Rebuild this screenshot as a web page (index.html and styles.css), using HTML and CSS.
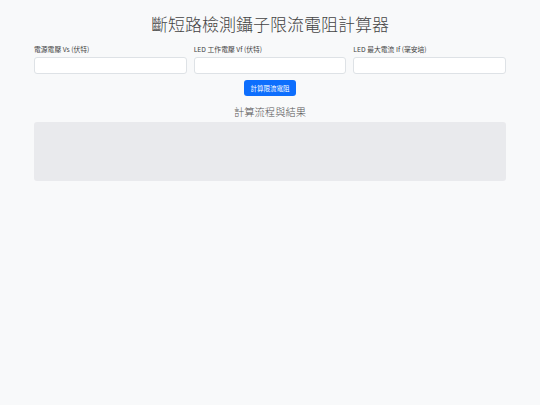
FILE: index.html
```html
<!DOCTYPE html>
<html lang="zh-Hant">
<head>
<meta charset="utf-8">
<title>斷短路檢測鑷子限流電阻計算器</title>
<link rel="stylesheet" href="styles.css">
</head>
<body>
<div class="container">
  <h1 class="title">斷短路檢測鑷子限流電阻計算器</h1>
  <div class="fields">
    <div class="field">
      <label class="label" for="vs">電源電壓 Vs (伏特)</label>
      <input class="input" id="vs" type="number">
    </div>
    <div class="field">
      <label class="label" for="vf">LED 工作電壓 Vf (伏特)</label>
      <input class="input" id="vf" type="number">
    </div>
    <div class="field">
      <label class="label" for="if">LED 最大電流 If (毫安培)</label>
      <input class="input" id="if" type="number">
    </div>
  </div>
  <div class="actions">
    <button class="btn" type="button">計算限流電阻</button>
  </div>
  <h2 class="subtitle">計算流程與結果</h2>
  <div class="result"></div>
</div>
</body>
</html>
```
FILE: styles.css
```css
html, body {
  margin: 0;
  padding: 0;
  background: #f8f9fa;
}
body {
  font-family: "Noto Sans CJK TC", "Noto Sans", sans-serif;
  color: #212529;
}
.container {
  width: 472px;
  margin: 0 auto;
  padding-top: 11px;
}
.title {
  margin: 0;
  text-align: center;
  font-size: 17px;
  font-weight: 300;
  line-height: 26px;
  color: #444;
}
.fields {
  display: grid;
  grid-template-columns: repeat(3, minmax(0, 1fr));
  column-gap: 7px;
  margin-top: 7px;
}
.field {
  display: flex;
  flex-direction: column;
  min-width: 0;
}
.label {
  font-size: 6.8px;
  line-height: 10px;
  color: #444;
  margin-bottom: 3px;
}
.input {
  box-sizing: border-box;
  width: 100%;
  min-width: 0;
  height: 17px;
  margin: 0;
  border: 1px solid #dee2e6;
  border-radius: 3px;
  background: #fff;
  padding: 0 4px;
}
.actions {
  display: flex;
  justify-content: center;
  margin-top: 6px;
}
.btn {
  height: 16px;
  width: 52px;
  padding: 0;
  border: none;
  border-radius: 3px;
  background: #0d6efd;
  color: #fff;
  font-family: "Noto Sans CJK TC", sans-serif;
  font-size: 6.5px;
}
.subtitle {
  margin: 8px 0 0;
  text-align: center;
  font-size: 10.3px;
  font-weight: 300;
  line-height: 16px;
  color: #555;
}
.result {
  margin-top: 2px;
  height: 59px;
  background: #e9eaed;
  border-radius: 3px;
}
```
